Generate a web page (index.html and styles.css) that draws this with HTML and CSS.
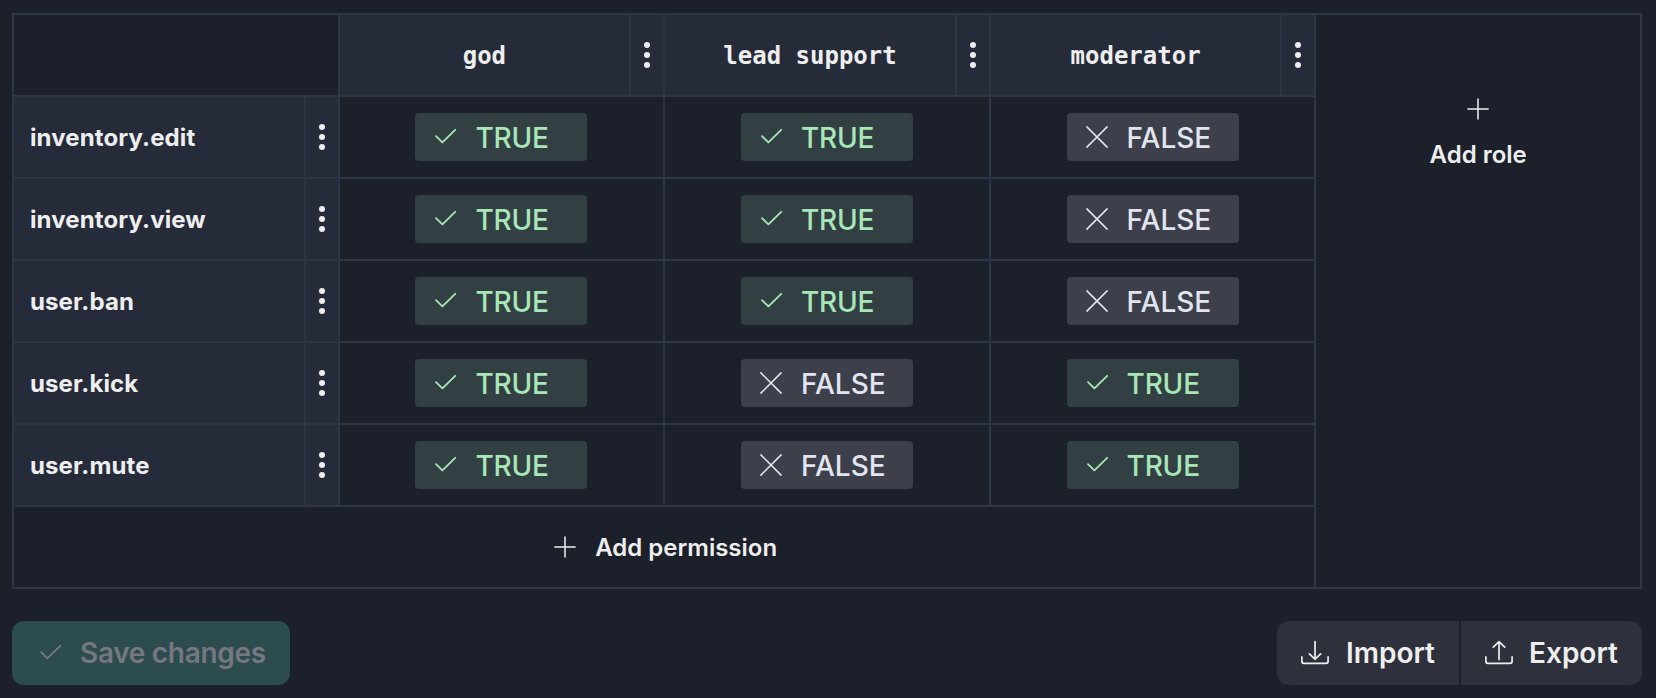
FILE: index.html
```html
<!DOCTYPE html>
<html lang="en">
<head>
<meta charset="utf-8">
<title>Permissions</title>
<link rel="stylesheet" href="styles.css">
</head>
<body>
<svg class="sprite" aria-hidden="true">
  <symbol id="check" viewBox="0 0 28 28"><path stroke-width="1.8" d="M5 13.2 11.4 19.4 24.2 6.8"/></symbol>
  <symbol id="cross" viewBox="0 0 28 28"><path d="M3.9 3.9 24.1 24.1M24.1 3.9 3.9 24.1"/></symbol>
  <symbol id="plus" viewBox="0 0 28 28"><path d="M14 3.9V24.1M3.9 14H24.1"/></symbol>
  <symbol id="import" viewBox="0 0 28 28"><path stroke-width="1.7" d="M14 2.6V20.2M8.3 14.8 14 20.2 19.7 14.8M.9 17.9V22.3a2 2 0 0 0 2 2H25.1a2 2 0 0 0 2-2V17.9"/></symbol>
  <symbol id="export" viewBox="0 0 28 28"><path stroke-width="1.7" d="M14 20.4V2.7M8.3 8.1 14 2.7 19.7 8.1M.9 17.9V22.3a2 2 0 0 0 2 2H25.1a2 2 0 0 0 2-2V17.9"/></symbol>
</svg>
<main class="page">
  <section class="matrix" id="matrix">
    <div class="cell"></div>
    <button class="cell add-role"><svg class="icon"><use href="#plus"/></svg><span>Add role</span></button>
    <button class="cell add-permission"><svg class="icon"><use href="#plus"/></svg><span>Add permission</span></button>
  </section>
  <footer class="actions">
    <button class="btn save" disabled><svg class="icon"><use href="#check"/></svg><span class="save-text">Save changes</span></button>
    <div class="group">
      <button class="btn"><svg class="icon"><use href="#import"/></svg><span class="import-text">Import</span></button>
      <button class="btn"><svg class="icon"><use href="#export"/></svg><span class="export-text">Export</span></button>
    </div>
  </footer>
</main>
<script src="app.js"></script>
</body>
</html>
```
FILE: styles.css
```css
* { box-sizing: border-box; }

body {
  margin: 0;
  background: #1c202a;
  color: #eeeeee;
  font-family: Inter, "Liberation Sans", sans-serif;
}

button {
  margin: 0;
  border: 0;
  padding: 0;
  color: inherit;
  font: inherit;
}

.sprite { display: none; }

.page { padding: 13px 14px 0 12px; }

.matrix {
  display: grid;
  grid-template-columns: repeat(5, minmax(0, 1fr));
  grid-template-rows: repeat(7, 80px);
  gap: 2px;
  padding: 2px;
  background: #2e3646;
}

.cell {
  display: flex;
  align-items: center;
  justify-content: center;
  background: #1c202a;
}

.head {
  background: #262b39;
  font-size: 24px;
  font-weight: 700;
  line-height: 36px;
}

.label { flex: 1; padding: 2px 0 0 16px; letter-spacing: 0.1px; }

.role .label {
  padding: 1px 0 0;
  text-align: center;
  font-family: "DejaVu Sans Mono", monospace;
  letter-spacing: 0;
}

.menu {
  display: flex;
  flex-direction: column;
  align-items: center;
  justify-content: center;
  gap: 4px;
  width: 34px;
  height: 80px;
  border-left: 2px solid #2e3646;
}

.dot {
  width: 6px;
  height: 6px;
  border-radius: 50%;
  background: #eeeeee;
}

.icon {
  flex: none;
  width: 28px;
  height: 28px;
  fill: none;
  stroke: currentColor;
  stroke-width: 1.5;
  stroke-linecap: round;
  stroke-linejoin: round;
}

.pill {
  display: flex;
  align-items: center;
  gap: 16px;
  width: 172px;
  height: 48px;
  padding-left: 16px;
  border-radius: 4px;
  background: #3d404b;
  color: #e0e5ef;
  font-size: 28px;
  font-weight: 500;
}

.pill span { padding-top: 1px; }

.pill.on { background: #324043; color: #a8e6b7; }
.pill.on span { letter-spacing: -0.2px; }

.add-role {
  grid-column: 5;
  grid-row: 1 / 8;
  flex-direction: column;
  justify-content: flex-start;
  gap: 17px;
  padding-top: 80px;
  font-size: 24px;
  font-weight: 600;
}

.add-permission {
  grid-column: 1 / 5;
  grid-row: 7;
  gap: 16px;
  font-size: 24px;
  font-weight: 600;
}

.actions {
  display: flex;
  justify-content: space-between;
  margin-top: 32px;
}

.group { display: flex; gap: 2px; }

.btn {
  display: flex;
  align-items: center;
  gap: 16px;
  width: 181px;
  height: 64px;
  padding-left: 24px;
  background: #2e313b;
  font-size: 28px;
  font-weight: 600;
}

.group .btn:first-child { width: 182px; border-radius: 12px 0 0 12px; }
.group .btn:last-child { border-radius: 0 12px 12px 0; }

.save-text { letter-spacing: -0.3px; }

.import-text { padding-left: 1px; }

.save {
  width: 278px;
  border-radius: 12px;
  background: #2d4c4e;
  color: #767881;
}
```
FILE: app.js
```js
const roles = ["god", "lead support", "moderator"];
const permissions = [
  ["inventory.edit", [true, true, false]],
  ["inventory.view", [true, true, false]],
  ["user.ban", [true, true, false]],
  ["user.kick", [true, false, true]],
  ["user.mute", [true, false, true]],
];

const menu = '<div class="menu"><i class="dot"></i><i class="dot"></i><i class="dot"></i></div>';
const head = (name, kind) =>
  `<div class="cell head ${kind}"><div class="label">${name}</div>${menu}</div>`;
const value = (on) =>
  `<div class="cell"><div class="pill ${on ? "on" : "off"}"><svg class="icon"><use href="#${on ? "check" : "cross"}"/></svg><span>${on ? "TRUE" : "FALSE"}</span></div></div>`;

const html = roles.map((name) => head(name, "role")).join("") +
  permissions.map(([name, values]) => head(name, "permission") + values.map(value).join("")).join("");
document.querySelector("#matrix .cell").insertAdjacentHTML("afterend", html);
```
